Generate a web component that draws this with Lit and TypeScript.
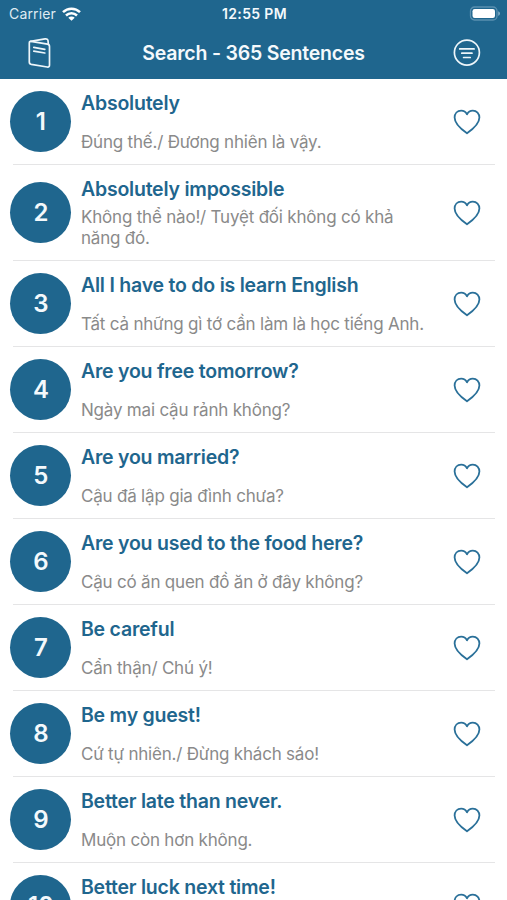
import { LitElement, html, css } from "lit";
import { customElement, property } from "lit/decorators.js";

const SENTENCES: [string, string][] = [
  ["Absolutely", "Đúng thế./ Đương nhiên là vậy."],
  ["Absolutely impossible", "Không thể nào!/ Tuyệt đối không có khả năng đó."],
  ["All I have to do is learn English", "Tất cả những gì tớ cần làm là học tiếng Anh."],
  ["Are you free tomorrow?", "Ngày mai cậu rảnh không?"],
  ["Are you married?", "Cậu đã lập gia đình chưa?"],
  ["Are you used to the food here?", "Cậu có ăn quen đồ ăn ở đây không?"],
  ["Be careful", "Cẩn thận/ Chú ý!"],
  ["Be my guest!", "Cứ tự nhiên./ Đừng khách sáo!"],
  ["Better late than never.", "Muộn còn hơn không."],
  ["Better luck next time!", ""],
];

@customElement("status-bar")
class StatusBar extends LitElement {
  static styles = css`
    :host { display: grid; grid-template-columns: 1fr auto 1fr; align-items: center; height: 27px; padding: 0 7px 0 9px; box-sizing: border-box; color: #f4f9fc; }
    .carrier { display: flex; align-items: center; gap: 6px; font-size: 14px; letter-spacing: 0.15px; color: #dfebf2; }
    .time { font-size: 14px; font-weight: 600; letter-spacing: 0.35px; }
    .battery { justify-self: end; }
    svg { display: block; }
  `;
  render() {
    return html`
      <div class="carrier"><span>Carrier</span>
        <svg width="19" height="14" viewBox="0 0 19 14" fill="none" stroke="#fff" stroke-width="2.5">
          <path d="M1 5.200a12.200 12.200 0 0 1 17 0"/>
          <path d="M4 8.500a7.900 7.900 0 0 1 11 0"/>
          <path d="M9.500 13.800L6.300 10.800a4.600 4.600 0 0 1 6.400 0z" fill="#fff" stroke="none"/>
        </svg>
      </div>
      <div class="time">12:55 PM</div>
      <svg class="battery" width="31" height="16" viewBox="0 0 31 16">
        <rect x="1.500" y="1" width="26.500" height="13" rx="4" fill="none" stroke="#5a90b0" stroke-width="1.300"/>
        <rect x="3.500" y="3" width="22.500" height="9" rx="2.200" fill="#fff"/>
        <path d="M29.200 5.200c2.400.8 2.400 3.800 0 4.600z" fill="#7fabc4"/>
      </svg>`;
  }
}

@customElement("nav-bar")
class NavBar extends LitElement {
  static styles = css`
    :host { display: grid; grid-template-columns: 1fr auto 1fr; align-items: center; height: 52px; padding: 0 26px; box-sizing: border-box; }
    .title { color: #f4f9fc; font-size: 19.5px; font-weight: 600; letter-spacing: -0.2px; }
    .filter { justify-self: end; }
    svg { display: block; }
  `;
  render() {
    return html`
      <svg width="26" height="32" viewBox="0 0 26 32" fill="none" stroke="#eef6fa" stroke-width="1.700" stroke-linecap="round" stroke-linejoin="round">
        <path d="M5 4.400L21.500 7.200Q23.500 7.600 23.500 9.600V28Q23.500 30.400 21.200 30L5.300 27.300Q3.300 26.900 3.300 24.900V6.200Q3.300 4.100 5 4.400Z"/>
        <path d="M4.600 4.400L19 1.900Q21.800 1.500 22 3.700L22.400 7.500"/>
        <path d="M7.800 10.400L18.800 12.300M7.800 14.100L18.800 16"/>
      </svg>
      <div class="title">Search - 365 Sentences</div>
      <svg class="filter" width="28" height="28" viewBox="0 0 28 28" fill="none" stroke="#eef6fa" stroke-width="1.700" stroke-linecap="round">
        <circle cx="13.900" cy="13.600" r="12.500"/>
        <path d="M6.700 9.900h14.400M8.800 14.200h10.200M10.600 18.500h6.600"/>
      </svg>`;
  }
}

@customElement("sentence-row")
class SentenceRow extends LitElement {
  @property({ type: Number }) number = 0;
  @property() phrase = "";
  @property() meaning = "";
  static styles = css`
    :host { display: block; }
    .row { display: flex; align-items: center; min-height: 85px; padding: 0 26px 0 10.4px; }
    .badge { flex: none; display: grid; place-items: center; width: 61px; height: 61px; margin-top: 0.4px; border-radius: 50%; background: #1f668e; color: #f4f9fc; font-size: 24px; font-weight: 600; }
    .copy { flex: none; width: 350px; min-height: 85px; box-sizing: border-box; padding: 12px 0 11px; margin-left: 9.6px; display: flex; flex-direction: column; justify-content: space-between; gap: 5px; }
    .phrase { color: #1f668e; font-size: 19.5px; line-height: 25px; font-weight: 600; letter-spacing: -0.22px; white-space: nowrap; }
    .meaning { color: #8a8a8a; font-size: 17px; line-height: 21px; letter-spacing: -0.2px; }
    .heart { flex: none; margin-left: auto; display: block; }
    .line { height: 1px; margin: 0 12px 0 13px; background: #e5e5e6; }
  `;
  render() {
    return html`
      <div class="row">
        <div class="badge">${this.number}</div>
        <div class="copy">
          <div class="phrase">${this.phrase}</div>
          <div class="meaning">${this.meaning}</div>
        </div>
        <svg class="heart" width="28" height="26" viewBox="0 0 28 26" fill="none" stroke="#2a7099" stroke-width="1.800" stroke-linejoin="round">
          <path d="M14 5.300C12.800 3 10.700 1.600 8.200 1.600C4.300 1.600 1.600 4.500 1.600 8.600C1.600 15 8 20.200 14 24.300C20 20.200 26.400 15 26.400 8.600C26.400 4.500 23.700 1.600 19.800 1.600C17.300 1.600 15.200 3 14 5.300Z"/>
        </svg>
      </div>
      <div class="line"></div>`;
  }
}

@customElement("app-root")
class AppRoot extends LitElement {
  static styles = css`
    :host { display: block; height: 900px; overflow: hidden; background: #fff; font-family: Inter, "Noto Sans", sans-serif; }
    .header { background: #1f668e; height: 79px; }
  `;
  render() {
    return html`
      <div class="header"><status-bar></status-bar><nav-bar></nav-bar></div>
      ${SENTENCES.map(([phrase, meaning], i) => html`
        <sentence-row .number=${i + 1} .phrase=${phrase} .meaning=${meaning}></sentence-row>`)}`;
  }
}
